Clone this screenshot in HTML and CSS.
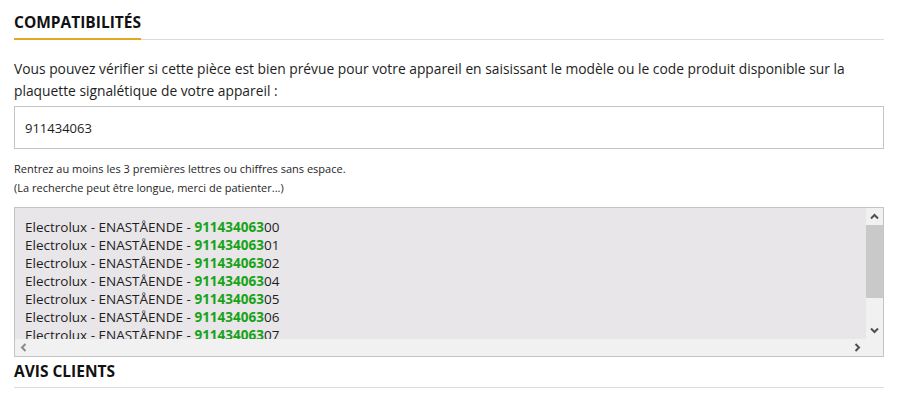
FILE: index.html
```html
<!DOCTYPE html>
<html lang="fr">
<head>
  <meta charset="UTF-8">
  <meta name="viewport" content="width=device-width, initial-scale=1">
  <title>Compatibilités</title>
  <link rel="stylesheet" href="styles.css">
</head>
<body>

<div class="product-tabs">
  <h3 class="tab-title"><span>COMPATIBILITÉS</span></h3>

  <p class="intro">Vous pouvez vérifier si cette pièce est bien prévue pour votre appareil en saisissant le modèle ou le code produit disponible sur la plaquette signalétique de votre appareil :</p>

  <input type="text" class="search" value="911434063">

  <p class="hint first">Rentrez au moins les 3 premières lettres ou chiffres sans espace.</p>
  <p class="hint">(La recherche peut être longue, merci de patienter...)</p>

  <div class="results">
    <div class="results-list">
      <div class="row">Electrolux - ENASTÅENDE - <b>911434063</b>00</div>
      <div class="row">Electrolux - ENASTÅENDE - <b>911434063</b>01</div>
      <div class="row">Electrolux - ENASTÅENDE - <b>911434063</b>02</div>
      <div class="row">Electrolux - ENASTÅENDE - <b>911434063</b>04</div>
      <div class="row">Electrolux - ENASTÅENDE - <b>911434063</b>05</div>
      <div class="row">Electrolux - ENASTÅENDE - <b>911434063</b>06</div>
      <div class="row">Electrolux - ENASTÅENDE - <b>911434063</b>07</div>
    </div>

    <!-- fake scrollbars (headless browser hides the real ones) -->
    <div class="sb sb-v">
      <span class="sb-btn">
        <svg width="9" height="9" viewBox="0 0 9 9"><path d="M1 6.5L4.5 3L8 6.5" fill="none" stroke="#505050" stroke-width="2"/></svg>
      </span>
      <span class="sb-track"><span class="sb-thumb"></span></span>
      <span class="sb-btn">
        <svg width="9" height="9" viewBox="0 0 9 9"><path d="M1 2.5L4.5 6L8 2.5" fill="none" stroke="#505050" stroke-width="2"/></svg>
      </span>
    </div>
    <div class="sb sb-h">
      <span class="sb-btn">
        <svg width="9" height="9" viewBox="0 0 9 9"><path d="M6.5 1L3 4.5L6.5 8" fill="none" stroke="#8a8a8a" stroke-width="2"/></svg>
      </span>
      <span class="sb-track"></span>
      <span class="sb-btn">
        <svg width="9" height="9" viewBox="0 0 9 9"><path d="M2.5 1L6 4.5L2.5 8" fill="none" stroke="#505050" stroke-width="2"/></svg>
      </span>
    </div>
    <div class="sb-corner"></div>
  </div>

  <h3 class="tab-title plain"><span>AVIS CLIENTS</span></h3>
</div>

</body>
</html>
```

FILE: styles.css
```css
body {
  margin: 0;
  font-family: "Open Sans", sans-serif;
  color: #1e1e1e;
  background: #fff;
}
.product-tabs {
  width: 870px;
  padding: 0 14px;
}
.tab-title {
  margin: 0;
  padding-top: 12px;
  font-size: 15.5px;
  font-weight: 700;
  line-height: 20px;
  color: #111;
  border-bottom: 1px solid #dcdcdc;
}
.tab-title span {
  display: inline-block;
  padding-bottom: 6px;
  margin-bottom: -1px;
  border-bottom: 2px solid #e5a722;
}
.tab-title.plain {
  padding-top: 4px;
}
.tab-title.plain span {
  border-bottom: none;
  padding-bottom: 7px;
}
.intro {
  margin: 18px 0 4px;
  font-size: 13.8px;
  line-height: 22px;
}
.search {
  display: block;
  box-sizing: border-box;
  width: 100%;
  height: 43px;
  padding: 0 10px;
  border: 1px solid #c4c4c4;
  font-family: inherit;
  font-size: 13px;
  color: #1e1e1e;
  outline: none;
}
.hint {
  margin: 0;
  font-size: 11px;
  line-height: 19px;
}
.hint.first {
  margin-top: 10px;
}
.results {
  display: grid;
  grid-template-columns: 1fr 17px;
  grid-template-rows: 1fr 17px;
  box-sizing: border-box;
  height: 150px;
  margin-top: 10px;
  border: 1px solid #c4c4c4;
  background: #f1f1f1;
}
.results-list {
  padding: 10px 10px 0;
  background: #e8e6e9;
  overflow: hidden;
  white-space: nowrap;
  font-size: 13.5px;
  line-height: 18px;
}
.row b {
  color: #17a317;
  font-weight: 700;
}

/* scrollbars */
.sb {
  display: flex;
  background: #f1f1f1;
}
.sb-v {
  flex-direction: column;
}
.sb-btn {
  display: flex;
  align-items: center;
  justify-content: center;
  flex: 0 0 17px;
  height: 17px;
}
.sb-track {
  flex: 1;
  display: flex;
  flex-direction: column;
}
.sb-thumb {
  height: 73px;
  background: #c9c9c9;
}
.sb-corner {
  background: #f1f1f1;
}
```
